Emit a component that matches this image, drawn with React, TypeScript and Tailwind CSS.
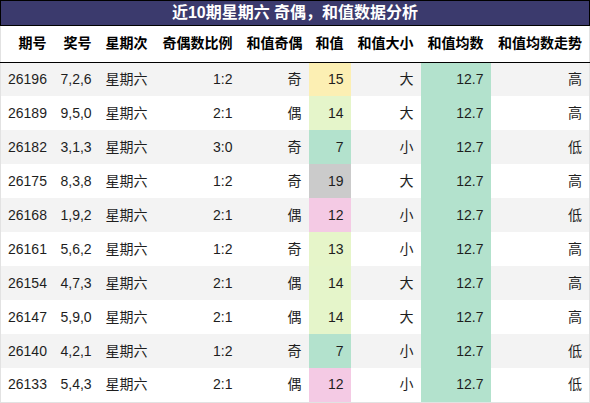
const headers = ["期号", "奖号", "星期次", "奇偶数比例", "和值奇偶", "和值", "和值大小", "和值均数", "和值均数走势"]

const cols = ["w-[53px]", "w-[45px]", "w-[56px]", "w-[85px]", "w-[69px]", "w-[42px]", "w-[70px]", "w-[70px]", "w-[99px]"]

type Row = {
    issue: string
    nums: string
    ratio: string
    parity: string
    sum: number
    sumBg: string
    size: string
    trend: string
}

const rows: Row[] = [
    { issue: "26196", nums: "7,2,6", ratio: "1:2", parity: "奇", sum: 15, sumBg: "bg-[#fcefb3]", size: "大", trend: "高" },
    { issue: "26189", nums: "9,5,0", ratio: "2:1", parity: "偶", sum: 14, sumBg: "bg-[#e5f5ca]", size: "大", trend: "高" },
    { issue: "26182", nums: "3,1,3", ratio: "3:0", parity: "奇", sum: 7, sumBg: "bg-[#b3e2cd]", size: "小", trend: "低" },
    { issue: "26175", nums: "8,3,8", ratio: "1:2", parity: "奇", sum: 19, sumBg: "bg-[#cbcbcb]", size: "大", trend: "高" },
    { issue: "26168", nums: "1,9,2", ratio: "2:1", parity: "偶", sum: 12, sumBg: "bg-[#f4cae4]", size: "小", trend: "低" },
    { issue: "26161", nums: "5,6,2", ratio: "1:2", parity: "奇", sum: 13, sumBg: "bg-[#e6f5c9]", size: "小", trend: "高" },
    { issue: "26154", nums: "4,7,3", ratio: "2:1", parity: "偶", sum: 14, sumBg: "bg-[#e5f5ca]", size: "大", trend: "高" },
    { issue: "26147", nums: "5,9,0", ratio: "2:1", parity: "偶", sum: 14, sumBg: "bg-[#e5f5ca]", size: "大", trend: "高" },
    { issue: "26140", nums: "4,2,1", ratio: "1:2", parity: "奇", sum: 7, sumBg: "bg-[#b3e2cd]", size: "小", trend: "低" },
    { issue: "26133", nums: "5,4,3", ratio: "2:1", parity: "偶", sum: 12, sumBg: "bg-[#f4cae4]", size: "小", trend: "低" },
]

export default function App() {
    return (
        <div
            className="w-[590px] h-[403px] bg-white overflow-hidden"
            style={{ fontFamily: '"Liberation Sans", "Noto Sans CJK SC", sans-serif' }}
        >
            {/* Title */}
            <div className="h-[26px] border border-black bg-[#3b3a6d] text-white font-bold text-[16px] leading-[23px] text-center">
                近10期星期六 奇偶，和值数据分析
            </div>

            <table className="table-fixed border-collapse w-[589px] text-[14px] border-x border-b border-[#e2e2e2]">
                <colgroup>
                    {cols.map((c, i) => (
                        <col key={i} className={c} />
                    ))}
                </colgroup>
                <thead>
                    <tr className="h-[36px] border-b border-black">
                        {headers.map((h) => (
                            <th key={h} className="px-[7px] text-right font-bold text-black whitespace-nowrap">
                                {h}
                            </th>
                        ))}
                    </tr>
                </thead>
                <tbody className="text-[#1e1e1e]">
                    {rows.map((r, i) => (
                        <tr key={r.issue} className={`h-[34px] ${i % 2 === 0 ? "bg-[#f3f3f3]" : "bg-white"}`}>
                            <td className="px-[7px] text-right">{r.issue}</td>
                            <td className="px-[7px] text-right">{r.nums}</td>
                            <td className="px-[7px] text-right">星期六</td>
                            <td className="px-[7px] text-right">{r.ratio}</td>
                            <td className="px-[7px] text-right">{r.parity}</td>
                            <td className={`px-[7px] text-right ${r.sumBg}`}>{r.sum}</td>
                            <td className="px-[7px] text-right">{r.size}</td>
                            <td className="px-[7px] text-right bg-[#b3e2cd]">12.7</td>
                            <td className="px-[7px] text-right">{r.trend}</td>
                        </tr>
                    ))}
                </tbody>
            </table>
        </div>
    )
}
